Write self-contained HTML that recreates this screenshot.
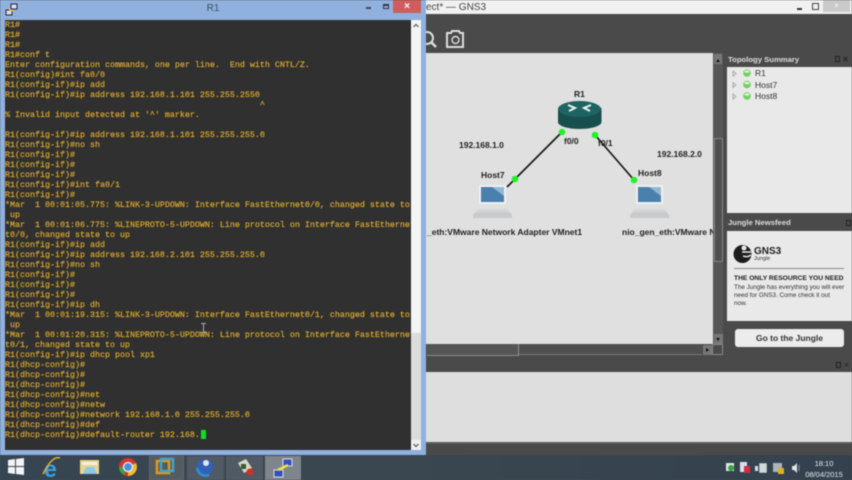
<!DOCTYPE html>
<html>
<head>
<meta charset="utf-8">
<style>
html,body{margin:0;padding:0;width:852px;height:480px;overflow:hidden;background:#4a4a4a;}
*{box-sizing:border-box;}
.a{position:absolute;}
body{font-family:"Liberation Sans",sans-serif;position:relative;}
#wrap{position:absolute;left:0;top:0;width:852px;height:480px;overflow:hidden;background:#4a4a4a;filter:blur(0.4px);}
#term{position:absolute;left:5px;top:20px;width:406px;height:430px;background:#303030;overflow:hidden;}
#term pre{margin:0;position:absolute;left:0;top:0;font:8.34px/10px "Liberation Mono",monospace;color:#d2a22e;white-space:pre;-webkit-text-stroke:0.25px #d2a22e;}
.lbl{position:absolute;font-weight:bold;color:#222;font-size:8.5px;white-space:nowrap;line-height:10px;}
.top{position:absolute;font-size:8.5px;color:#333;line-height:10px;}
</style>
</head>
<body>
<div id="wrap">
<!-- GNS3 window -->
<div class="a" style="left:426px;top:0;width:426px;height:14px;background:#f1f1f1"></div>
<div class="a" style="left:426px;top:2px;font-size:10px;line-height:11px;color:#444;">ect* — GNS3</div>
<div class="a" style="left:797px;top:8px;width:5px;height:2px;background:#333"></div>
<div class="a" style="left:812px;top:3px;width:7px;height:7px;border:1px solid #444"></div>
<div class="a" style="left:823px;top:0;width:27px;height:12px;background:#c9c9c9;color:#fff;font-size:8px;line-height:12px;text-align:center">×</div>
<div class="a" style="left:426px;top:14px;width:426px;height:39px;background:#4a4a4a"></div>
<svg class="a" style="left:426px;top:28px" width="42" height="22" viewBox="0 0 42 22">
<circle cx="1" cy="10" r="6" fill="none" stroke="#ddd" stroke-width="2"/><path d="M5 14l5 5" stroke="#ddd" stroke-width="2.500"/>
<path d="M21 5h4l1-2h7l1 2h3v14H21z" fill="none" stroke="#ddd" stroke-width="2"/><circle cx="29.500" cy="12" r="3.500" fill="none" stroke="#ddd" stroke-width="1.400"/>
</svg>
<!-- canvas -->
<div class="a" style="left:426px;top:53px;width:287px;height:291px;background:#e0e0e0"></div>
<svg class="a" style="left:426px;top:53px;overflow:hidden" width="287" height="291" viewBox="426 53 287 291">
<path d="M562 132L507 187M595 135L634 180" stroke="#111" stroke-width="1.600"/>
<path d="M558 108v14c0 4 10 7 21.500 7s22-3 22-7v-14z" fill="#174f4e"/>
<ellipse cx="579.500" cy="109" rx="21.500" ry="8" fill="#1d6462"/>
<path d="M568 105l7 3l-6 3M591 105l-7 3l6 3" fill="none" stroke="#eef4f2" stroke-width="2"/>
<circle cx="562" cy="132" r="3.300" fill="#22f02a"/><circle cx="595" cy="135" r="3.300" fill="#22f02a"/>
<circle cx="515" cy="179" r="3.300" fill="#22f02a"/><circle cx="634" cy="180" r="3.300" fill="#22f02a"/>
<defs><linearGradient id="b" x1="0" y1="0" x2="0" y2="1"><stop offset="0" stop-color="#e0e2e4"/><stop offset="1" stop-color="#c4c6c8"/></linearGradient></defs>
<g>
<rect x="479" y="185" width="27" height="19" fill="#eef0f2"/><rect x="481" y="187" width="23" height="15" fill="#4a80ac"/><path d="M492 187h12v9z" fill="#90b8d4"/>
<path d="M479 207h27l6 8H473z" fill="url(#b)"/><rect x="473" y="215" width="39" height="3" fill="#c8cacc"/>
</g>
<g>
<rect x="636" y="185" width="27" height="19" fill="#eef0f2"/><rect x="638" y="187" width="23" height="15" fill="#4a80ac"/><path d="M649 187h12v9z" fill="#90b8d4"/>
<path d="M636 207h27l6 8H630z" fill="url(#b)"/><rect x="630" y="215" width="39" height="3" fill="#c8cacc"/>
</g>
</svg>
<div class="lbl" style="left:574px;top:89px">R1</div>
<div class="lbl" style="left:564px;top:136px">f0/0</div>
<div class="lbl" style="left:598px;top:138px">f0/1</div>
<div class="lbl" style="left:459px;top:140px">192.168.1.0</div>
<div class="lbl" style="left:657px;top:149px">192.168.2.0</div>
<div class="lbl" style="left:481px;top:170px">Host7</div>
<div class="lbl" style="left:638px;top:168px">Host8</div>
<div class="lbl" style="left:427px;top:227px">_eth:VMware Network Adapter VMnet1</div>
<div class="a" style="left:622px;top:227px;width:91px;height:12px;overflow:hidden"><div class="lbl" style="left:0;top:0">nio_gen_eth:VMware Network</div></div>
<!-- v scrollbar -->
<div class="a" style="left:713px;top:53px;width:10px;height:291px;background:#565656"></div>
<div class="a" style="left:714px;top:54px;width:8px;height:10px;background:#777"></div>
<div class="a" style="left:716px;top:57px;width:0;height:0;border:2px solid transparent;border-bottom:3px solid #111"></div>
<div class="a" style="left:714px;top:138px;width:9px;height:124px;border:1px solid #888;background:#505050"></div>
<div class="a" style="left:714px;top:334px;width:9px;height:10px;background:#777"></div>
<div class="a" style="left:716px;top:338px;width:0;height:0;border:2.500px solid transparent;border-top:3px solid #111"></div>
<!-- h scrollbar -->
<div class="a" style="left:427px;top:344px;width:92px;height:12px;border-right:1px solid #8e8e8e;border-bottom:1px solid #8e8e8e;background:#555"></div>
<div class="a" style="left:519px;top:344px;width:183px;height:11px;background:#4f4f4f;border-bottom:1px solid #777"></div>
<div class="a" style="left:703px;top:345px;width:9px;height:10px;background:#777"></div>
<div class="a" style="left:706px;top:348px;width:0;height:0;border:2.500px solid transparent;border-left:3px solid #111"></div>
<div class="a" style="left:712px;top:344px;width:11px;height:11px;border:1px solid #888"></div>
<!-- right dock -->
<div class="lbl" style="left:728px;top:55px;color:#ddd;font-size:7.700px;">Topology Summary</div>
<div class="a" style="left:835px;top:56px;width:5px;height:6px;border:1px solid #222"></div>
<div class="a" style="left:843px;top:54px;color:#222;font-size:9px;line-height:10px;font-weight:bold">×</div>
<div class="a" style="left:727px;top:67px;width:125px;height:146px;background:#e9e9e9"></div>
<svg class="a" style="left:730px;top:68px" width="24" height="36">
<g fill="none" stroke="#aaa"><path d="M3 3l3 2.500-3 2.500zM3 14.500l3 2.500-3 2.500zM3 26l3 2.500-3 2.500z"/></g>
<g fill="#6fd05f"><circle cx="17" cy="5" r="3.800"/><circle cx="17" cy="16.500" r="3.800"/><circle cx="17" cy="28" r="3.800"/></g>
<g fill="#dff5d9"><ellipse cx="17" cy="3.500" rx="2.500" ry="1.300"/><ellipse cx="17" cy="15" rx="2.500" ry="1.300"/><ellipse cx="17" cy="26.500" rx="2.500" ry="1.300"/></g>
</svg>
<div class="top" style="left:755px;top:68px">R1</div>
<div class="top" style="left:755px;top:80px">Host7</div>
<div class="top" style="left:755px;top:91px">Host8</div>
<div class="lbl" style="left:728px;top:218px;color:#ddd;font-size:7.700px;">Jungle Newsfeed</div>
<div class="a" style="left:846px;top:220px;width:5px;height:6px;border:1px solid #222"></div>
<div class="a" style="left:727px;top:231px;width:125px;height:90px;background:#e9e9e9"></div>
<svg class="a" style="left:733px;top:243px" width="20" height="22" viewBox="0 0 20 22">
<circle cx="9.500" cy="11" r="9" fill="#1c1c1c"/><circle cx="11" cy="5" r="2.500" fill="#e9e9e9"/><path d="M9 9h9M10 13c3 1 5 1 8-1" stroke="#e9e9e9" stroke-width="1.500" fill="none"/>
</svg>
<div class="a" style="left:754px;top:246px;font-size:10px;font-weight:bold;color:#1c1c1c;line-height:11px">GNS3</div>
<div class="a" style="left:754px;top:256px;font-size:5.500px;color:#333;line-height:6px">Jungle</div>
<div class="a" style="left:734px;top:268px;width:110px;height:1px;background:#888"></div>
<div class="a" style="left:734px;top:274px;font-size:6.700px;font-weight:bold;color:#1c1c1c;line-height:9px;white-space:nowrap">THE ONLY RESOURCE YOU NEED</div>
<div class="a" style="left:734px;top:283.500px;font-size:6.300px;color:#333;line-height:8px;white-space:nowrap">The Jungle has everything you will ever<br>need for GNS3. Come check it out<br>now.</div>
<div class="a" style="left:735px;top:329px;width:109px;height:18px;background:#ececec;border-radius:3px;font-size:8.500px;font-weight:bold;color:#333;text-align:center;line-height:18px">Go to the Jungle</div>
<div class="a" style="left:836px;top:362px;width:5px;height:6px;border:1px solid #222"></div>
<div class="a" style="left:844px;top:360px;color:#222;font-size:9px;line-height:10px">×</div>
<!-- bottom panel -->
<div class="a" style="left:426px;top:372px;width:426px;height:70px;background:#dedede"></div>
<div class="a" style="left:426px;top:442px;width:426px;height:2px;background:#5c5c5c"></div>
<!-- taskbar -->
<div class="a" style="left:0;top:455px;width:852px;height:25px;background:linear-gradient(90deg,#364552 0,#3b4750 40%,#34424f 100%)"></div>
<div class="a" style="left:149px;top:456px;width:35px;height:24px;background:#545c60;border:1px solid #5e666a"></div>
<div class="a" style="left:187px;top:456px;width:37px;height:24px;background:#4f5a64;"></div>
<div class="a" style="left:226px;top:456px;width:37px;height:24px;background:#4f5a64;"></div>
<div class="a" style="left:265px;top:456px;width:36px;height:24px;background:#7e868c;"></div>
<svg class="a" style="left:0;top:455px" width="310" height="25" viewBox="0 455 310 25">
<path d="M8 460l7-1v7H8zM16 459l8-1v8h-8zM8 467h7v7l-7-1zM16 467h8v8l-8-1z" fill="#f2f4f6"/>
<text x="44" y="477" font-family="Liberation Sans,sans-serif" font-weight="bold" font-size="23" fill="#3aa0e0">e</text>
<path d="M43 474c6-12 12-18 17-16" stroke="#e0b030" stroke-width="1.500" fill="none"/>
<rect x="80" y="460" width="19" height="14" fill="#e8d48c"/><rect x="82" y="462" width="15" height="3" fill="#f4f0dc"/><path d="M83 474l3-7h8l3 7z" fill="#8fc8e8"/>
<circle cx="128" cy="467" r="9" fill="#d8362a"/><path d="M128 467l-9 0a9 9 0 0 0 5 8z" fill="#3fa040"/><path d="M128 467l8-4a9 9 0 0 1-8 13z" fill="#e8c030"/><circle cx="128" cy="467" r="4.500" fill="#4a8fe0" stroke="#eee" stroke-width="1.300"/>
<rect x="157" y="461" width="12" height="12" fill="none" stroke="#dd9a20" stroke-width="2.500"/><rect x="161" y="459" width="12" height="12" fill="none" stroke="#4aa0c8" stroke-width="2.500"/>
<circle cx="205" cy="467" r="8" fill="#2f62b8"/><circle cx="206" cy="463" r="3" fill="#e6e6f0"/><path d="M197 468c1 6 7 9 12 7" stroke="#2f8fd8" stroke-width="2.500" fill="none"/>
<path d="M238 463l8-4 6 9-8 5z" fill="#d8d8c8"/><rect x="241" y="464" width="5" height="5" fill="#3a5a30"/><circle cx="250" cy="472" r="3.500" fill="#d03028"/>
<rect x="283" y="459" width="9" height="7" fill="#3050c0" stroke="#ddd"/><rect x="274" y="470" width="9" height="7" fill="#3050c0" stroke="#ddd"/><path d="M278 470l10-5" stroke="#f0e040" stroke-width="2.500"/>
</svg>
<svg class="a" style="left:720px;top:458px" width="80" height="20">
<rect x="6" y="5" width="8" height="8" fill="#dfe6e2"/><circle cx="11" cy="10" r="3" fill="#35a545"/>
<rect x="20" y="4" width="7" height="10" fill="#dde"/><rect x="24" y="8" width="6" height="7" fill="#d03040"/>
<rect x="39" y="5" width="8" height="10" fill="#cfd8dc" stroke="#445" stroke-width="0.500"/><rect x="35" y="8" width="3" height="5" fill="#dde"/>
<rect x="53" y="5" width="9" height="9" fill="#aab4bb"/><rect x="58" y="10" width="6" height="6" fill="#e0b020"/>
<path d="M72 8h2l3-3v10l-3-3h-2z" fill="#dfe6ea"/><path d="M79 7v6" stroke="#9aa" stroke-width="0.800"/>
</svg>
<div class="a" style="left:800px;top:458px;width:48px;font-size:7.500px;color:#e6e9ec;line-height:11px;text-align:center">18:10<br>08/04/2015</div>
<!-- terminal window -->
<div class="a" style="left:0;top:0;width:426px;height:455px;background:#90b1dd"></div>
<div class="a" style="left:393px;top:0;width:28px;height:13px;background:#cf5d5d;color:#fff;font-size:10px;line-height:13px;text-align:center;font-weight:bold">×</div>
<div class="a" style="left:366px;top:7px;width:5px;height:2px;background:#445"></div>
<div class="a" style="left:383px;top:4px;width:6px;height:5px;border:1px solid #334;border-top-width:2px"></div>
<div class="a" style="left:0;top:3px;width:426px;text-align:center;font-size:10px;line-height:12px;color:#3f4f66">R1</div>
<svg class="a" style="left:5px;top:3px" width="13" height="13" viewBox="0 0 13 13">
<rect x="6" y="1" width="6" height="5" fill="#dde" stroke="#223"/><rect x="1" y="7" width="6" height="5" fill="#dde" stroke="#223"/><path d="M4 6l4 2" stroke="#e8d020" stroke-width="1.500"/>
</svg>
<div id="term"><pre>R1#
R1#
R1#
R1#conf t
Enter configuration commands, one per line.  End with CNTL/Z.
R1(config)#int fa0/0
R1(config-if)#ip add
R1(config-if)#ip address 192.168.1.101 255.255.2550
                                                   ^
% Invalid input detected at '^' marker.

R1(config-if)#ip address 192.168.1.101 255.255.255.0
R1(config-if)#no sh
R1(config-if)#
R1(config-if)#
R1(config-if)#
R1(config-if)#int fa0/1
R1(config-if)#
*Mar  1 00:01:05.775: %LINK-3-UPDOWN: Interface FastEthernet0/0, changed state to
 up
*Mar  1 00:01:06.775: %LINEPROTO-5-UPDOWN: Line protocol on Interface FastEthernet
t0/0, changed state to up
R1(config-if)#ip add
R1(config-if)#ip address 192.168.2.101 255.255.255.0
R1(config-if)#no sh
R1(config-if)#
R1(config-if)#
R1(config-if)#
R1(config-if)#ip dh
*Mar  1 00:01:19.315: %LINK-3-UPDOWN: Interface FastEthernet0/1, changed state to
 up
*Mar  1 00:01:20.315: %LINEPROTO-5-UPDOWN: Line protocol on Interface FastEthernet
t0/1, changed state to up
R1(config-if)#ip dhcp pool xp1
R1(dhcp-config)#
R1(dhcp-config)#
R1(dhcp-config)#
R1(dhcp-config)#net
R1(dhcp-config)#netw
R1(dhcp-config)#network 192.168.1.0 255.255.255.0
R1(dhcp-config)#def
R1(dhcp-config)#default-router 192.168.</pre>
<div class="a" style="left:196px;top:410px;width:5px;height:9px;background:#0fdc2a"></div>
<div class="a" style="left:198px;top:303px;width:1px;height:9px;background:#aaa"></div>
<div class="a" style="left:196px;top:303px;width:5px;height:1px;background:#aaa"></div>
<div class="a" style="left:196px;top:312px;width:5px;height:1px;background:#aaa"></div>
</div>
<!-- terminal scrollbar -->
<div class="a" style="left:411px;top:20px;width:10px;height:430px;background:#dcdcdc"></div>
<div class="a" style="left:411px;top:20px;width:10px;height:313px;background:#f4f4f4"></div>
<svg class="a" style="left:411px;top:20px" width="10" height="430">
<path d="M2.500 7l2.500-2.500L7.500 7" fill="none" stroke="#555" stroke-width="1.200"/>
<rect x="0" y="420" width="10" height="10" fill="#f0f0f0"/>
<path d="M2.500 424l2.500 2.500L7.500 424" fill="none" stroke="#555" stroke-width="1.200"/>
</svg>
</div>
</body>
</html>
